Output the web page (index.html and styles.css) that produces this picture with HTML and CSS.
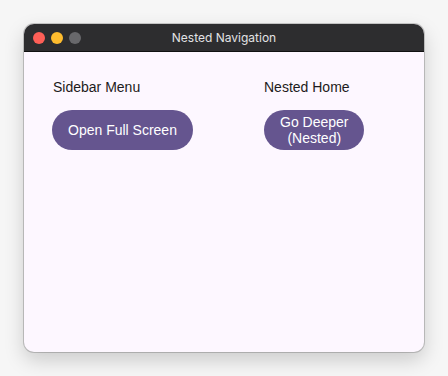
FILE: index.html
```html
<!DOCTYPE html>
<html lang="en">

<head>
  <meta charset="UTF-8">
  <meta name="viewport" content="width=device-width, initial-scale=1.0">
  <title>Nested Navigation</title>
  <link rel="stylesheet" href="styles.css">
</head>

<body>
  <div class="window">
    <div class="titlebar">
      <div class="lights">
        <span class="light red"></span>
        <span class="light yellow"></span>
        <span class="light grey"></span>
      </div>
      <div class="title">Nested Navigation</div>
    </div>
    <div class="content">
      <div class="sidebar">
        <p class="label">Sidebar Menu</p>
        <button class="btn">Open Full Screen</button>
      </div>
      <div class="main">
        <p class="label">Nested Home</p>
        <button class="btn">Go Deeper<br>(Nested)</button>
      </div>
    </div>
  </div>
</body>

</html>
```

FILE: styles.css
```css
body {
  margin: 0;
  background: #f6f6f6;
  font-family: "Liberation Sans", Arial, sans-serif;
}

.window {
  margin: 24px;
  width: 400px;
  height: 328px;
  border-radius: 10px;
  overflow: hidden;
  background: #fdf7ff;
  box-shadow: 0 0 0 1px rgba(0, 0, 0, 0.18), 0 8px 20px rgba(0, 0, 0, 0.18);
  display: flex;
  flex-direction: column;
}

.titlebar {
  height: 28px;
  background: #2d2d2f;
  position: relative;
  display: flex;
  align-items: center;
  justify-content: center;
  border-bottom: 1px solid #111;
  box-sizing: border-box;
}

.lights {
  position: absolute;
  left: 9px;
  top: 8px;
  display: flex;
  gap: 6px;
}

.light {
  width: 12px;
  height: 12px;
  border-radius: 50%;
}

.red {
  background: #fe5f57;
}

.yellow {
  background: #febc2e;
}

.grey {
  background: #68686b;
}

.title {
  color: #e2e2e4;
  font-size: 12px;
  font-family: Inter, "Liberation Sans", sans-serif;
}

.content {
  flex: 1;
  display: flex;
}

.sidebar {
  width: 212px;
  padding: 27px 28px;
  box-sizing: border-box;
}

.main {
  flex: 1;
  padding: 27px 28px;
}

.label {
  margin: 0 0 14px 1px;
  font-size: 14px;
  line-height: 17px;
  color: #1d1b20;
}

.main .label {
  margin-left: 0;
}

.btn {
  min-height: 40px;
  padding: 0 16px;
  border: none;
  border-radius: 20px;
  background: #65558f;
  color: #fff;
  font-family: "Liberation Sans", Arial, sans-serif;
  font-size: 14px;
  line-height: 16px;
}
```
